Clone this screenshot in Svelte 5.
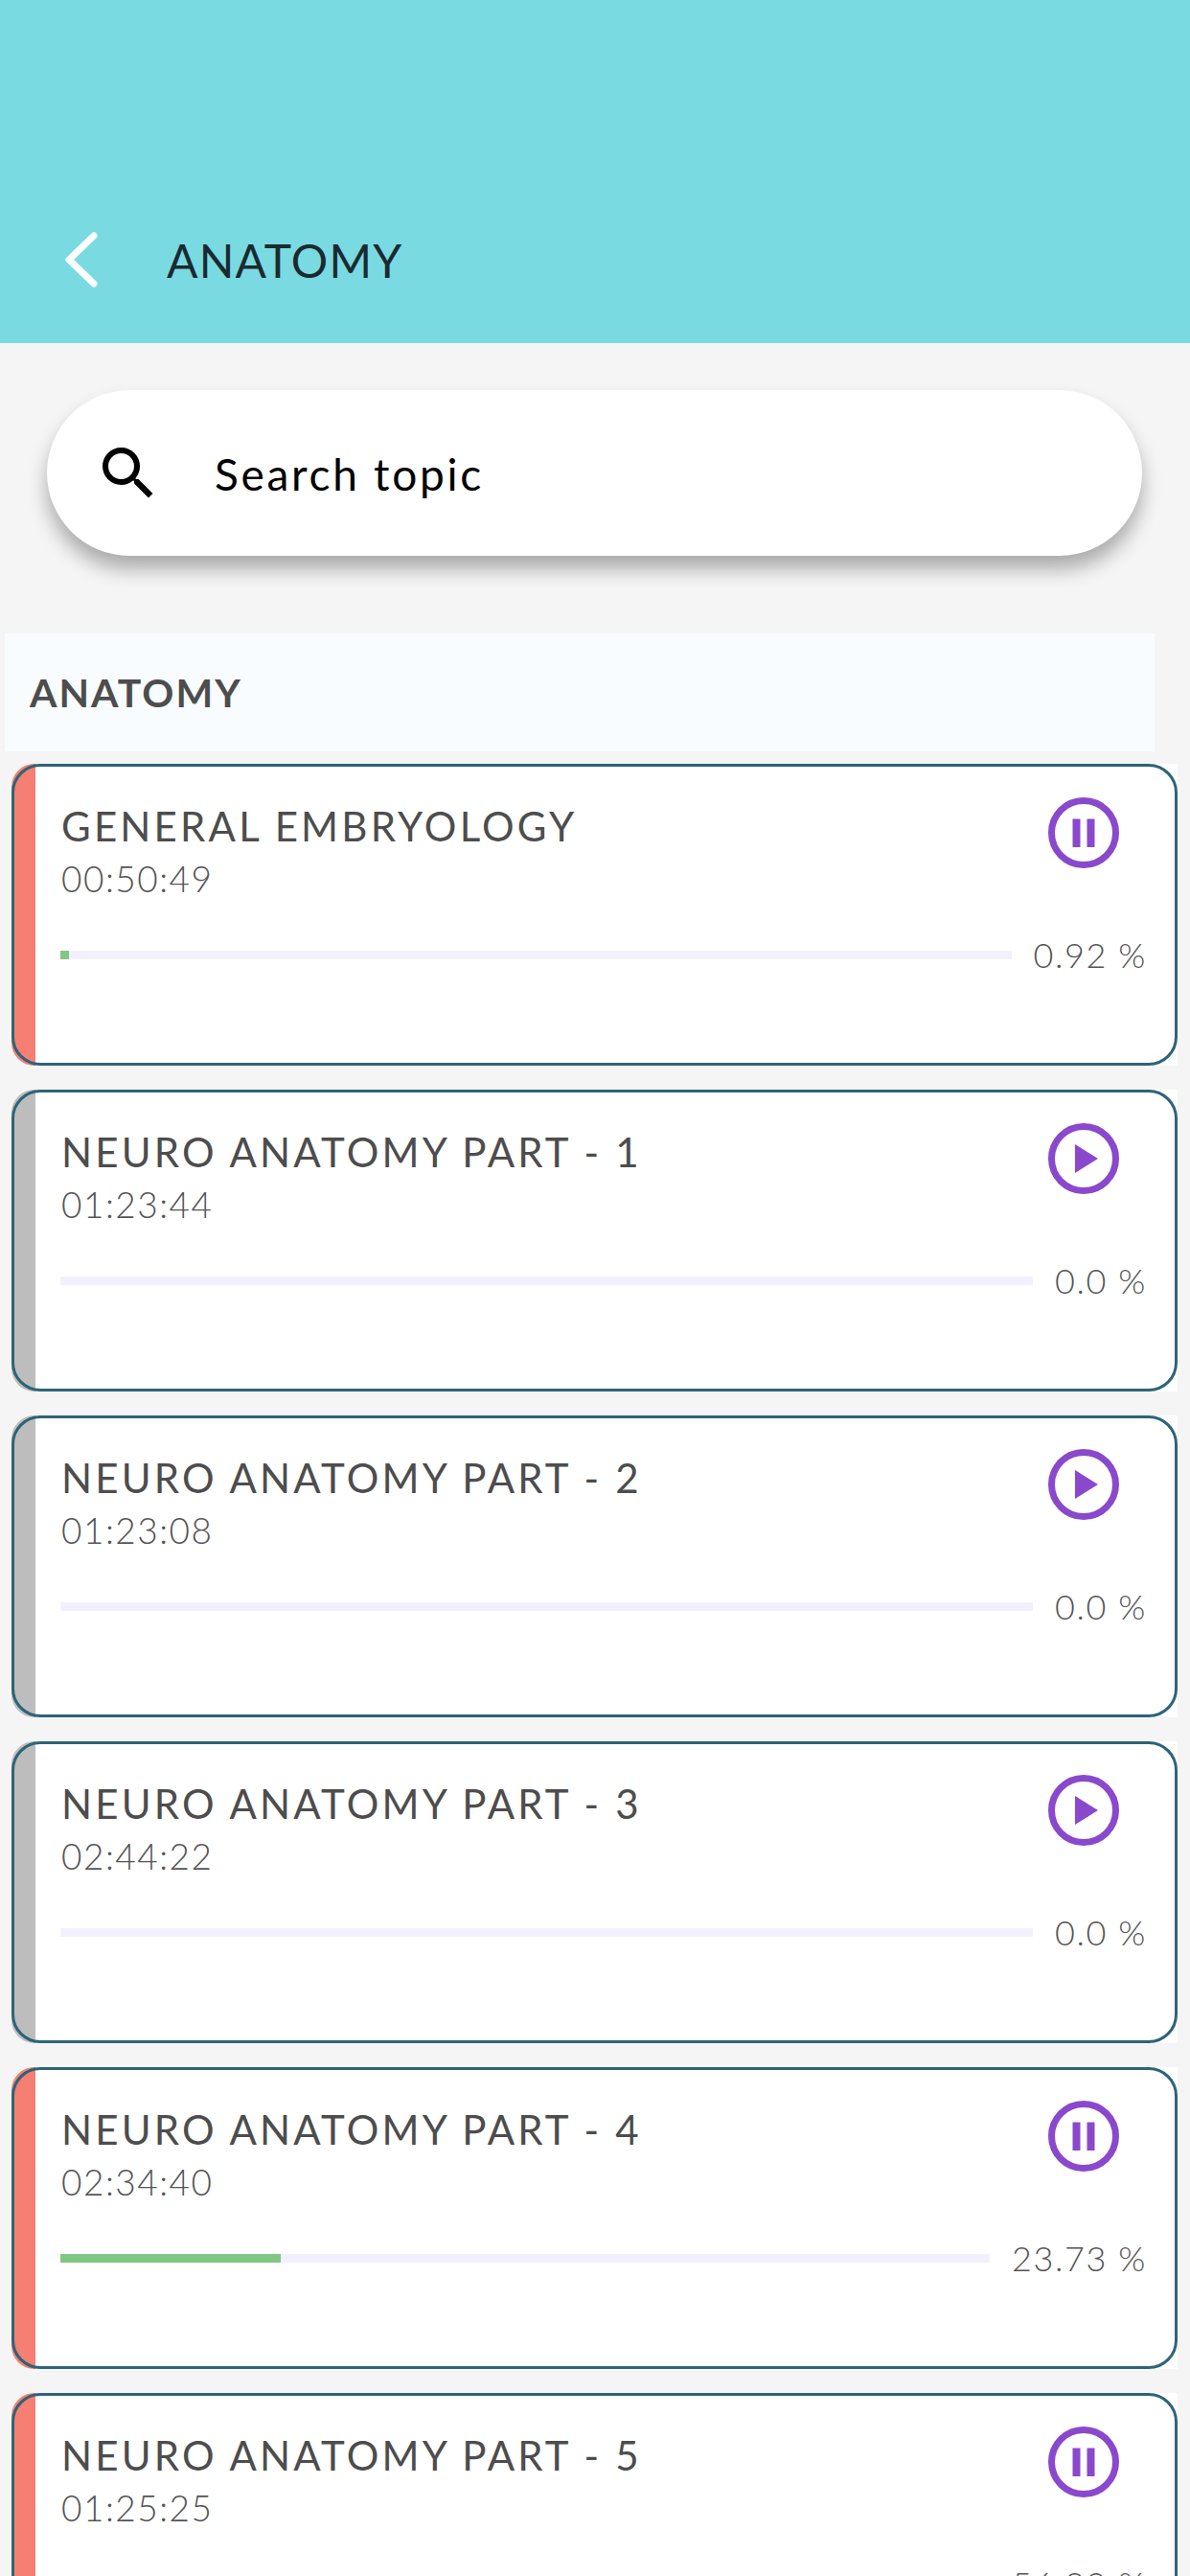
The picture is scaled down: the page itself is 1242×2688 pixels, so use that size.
<script>
  const lessons = [
    { title: 'GENERAL EMBRYOLOGY', time: '00:50:49', pct: 0.92, label: '0.92 %', started: true },
    { title: 'NEURO ANATOMY PART - 1', time: '01:23:44', pct: 0, label: '0.0 %', started: false },
    { title: 'NEURO ANATOMY PART - 2', time: '01:23:08', pct: 0, label: '0.0 %', started: false },
    { title: 'NEURO ANATOMY PART - 3', time: '02:44:22', pct: 0, label: '0.0 %', started: false },
    { title: 'NEURO ANATOMY PART - 4', time: '02:34:40', pct: 23.73, label: '23.73 %', started: true },
    { title: 'NEURO ANATOMY PART - 5', time: '01:25:25', pct: 56.3, label: '56.30 %', started: true }
  ];
</script>

<div class="page">
  <header class="topbar">
    <svg class="back" width="34" height="58" viewBox="0 0 34 58">
      <path d="M30 4 L4 29 L30 54" fill="none" stroke="#fff" stroke-width="7" stroke-linecap="round" stroke-linejoin="round" />
    </svg>
    <h1>ANATOMY</h1>
  </header>

  <div class="search">
    <svg class="search-icon" width="54" height="54" viewBox="3 3 18 18">
      <path d="M15.5 14h-.79l-.28-.27A6.471 6.471 0 0 0 16 9.5 6.5 6.5 0 1 0 9.5 16c1.61 0 3.09-.59 4.23-1.57l.27.28v.79l5 4.99L20.49 19l-4.99-5zm-6 0C7.01 14 5 11.99 5 9.5S7.01 5 9.5 5 14 7.01 14 9.5 11.99 14 9.5 14z" fill="#000" />
    </svg>
    <span class="placeholder">Search topic</span>
  </div>

  <div class="section">ANATOMY</div>

  <div class="list">
    {#each lessons as item}
      <div class="card" class:started={item.started}>
        <div class="inner">
          <div class="top">
            <div class="info">
              <div class="title">{item.title}</div>
              <div class="time">{item.time}</div>
            </div>
            <svg class="state" width="74" height="74" viewBox="0 0 74 74">
              <circle cx="37" cy="37" r="33.5" fill="none" stroke="#8a49cc" stroke-width="7" />
              {#if item.started}
                <rect x="25.5" y="22.5" width="8" height="29.5" fill="#8a49cc" />
                <rect x="40.5" y="22.5" width="8" height="29.5" fill="#8a49cc" />
              {:else}
                <path d="M28 22 L52 37 L28 52 Z" fill="#8a49cc" />
              {/if}
            </svg>
          </div>
          <div class="progress">
            <div class="track">
              <div class="fill" style="width: {item.pct}%"></div>
            </div>
            <div class="pct">{item.label}</div>
          </div>
        </div>
      </div>
    {/each}
  </div>
</div>

<style>
  :global(body) {
    margin: 0;
    background: #f5f5f5;
  }
  .page {
    height: 2688px;
    overflow: hidden;
    background: #f5f5f5;
    font-family: Lato, "Noto Sans", sans-serif;
  }
  .topbar {
    height: 358px;
    box-sizing: border-box;
    background: #79dae2;
    display: flex;
    align-items: center;
    padding: 184px 0 0 68px;
    gap: 72px;
  }
  h1 {
    margin: 0;
    font-size: 48px;
    font-weight: 400;
    letter-spacing: 1.2px;
    color: #1b2a30;
  }
  .search {
    margin: 49px 50px 0 49px;
    height: 173px;
    border-radius: 87px;
    background: #fff;
    box-shadow: 0 14px 20px rgba(0, 0, 0, 0.3);
    display: flex;
    align-items: center;
    padding-left: 58px;
    gap: 63px;
    font-size: 46px;
    letter-spacing: 2.7px;
    color: #000;
  }
  .placeholder {
    margin-top: 2px;
  }
  .search-icon {
    flex: none;
  }
  .section {
    margin: 81px 37px 0 5px;
    height: 123px;
    box-sizing: border-box;
    padding-left: 26px;
    display: flex;
    align-items: center;
    background: #f8fcff;
    font-size: 41px;
    font-weight: 700;
    letter-spacing: 2px;
    color: #4d4d4d;
  }
  .list {
    margin: 13px 13px 0 12px;
    display: flex;
    flex-direction: column;
    gap: 25px;
  }
  .card {
    height: 315px;
    flex: none;
    background: linear-gradient(90deg, #bdbdbd 25px, #fff 25px);
    border-radius: 24px 0 0 24px;
  }
  .card.started {
    background: linear-gradient(90deg, #f47f72 25px, #fff 25px);
  }
  .inner {
    height: 100%;
    box-sizing: border-box;
    border: 3px solid #2d6478;
    border-radius: 30px;
    padding: 32px 29px 0 48px;
  }
  .top {
    display: flex;
    justify-content: space-between;
    height: 134px;
  }
  .info {
    padding-left: 1px;
  }
  .title {
    font-size: 42px;
    line-height: 48px;
    letter-spacing: 3.2px;
    color: #4d4d4d;
    margin-top: 6px;
  }
  .time {
    font-size: 37px;
    line-height: 44px;
    font-weight: 300;
    letter-spacing: 1.5px;
    color: #555;
    margin-top: 9px;
  }
  .state {
    margin: 0 29px 0 0;
    flex: none;
  }
  .progress {
    display: flex;
    align-items: center;
    gap: 23px;
    margin-top: 8px;
  }
  .track {
    flex: 1;
    height: 9px;
    background: #f3f0fd;
  }
  .fill {
    height: 100%;
    background: #81c784;
  }
  .pct {
    font-size: 36px;
    line-height: 44px;
    font-weight: 300;
    letter-spacing: 1.6px;
    color: #555;
  }
</style>
